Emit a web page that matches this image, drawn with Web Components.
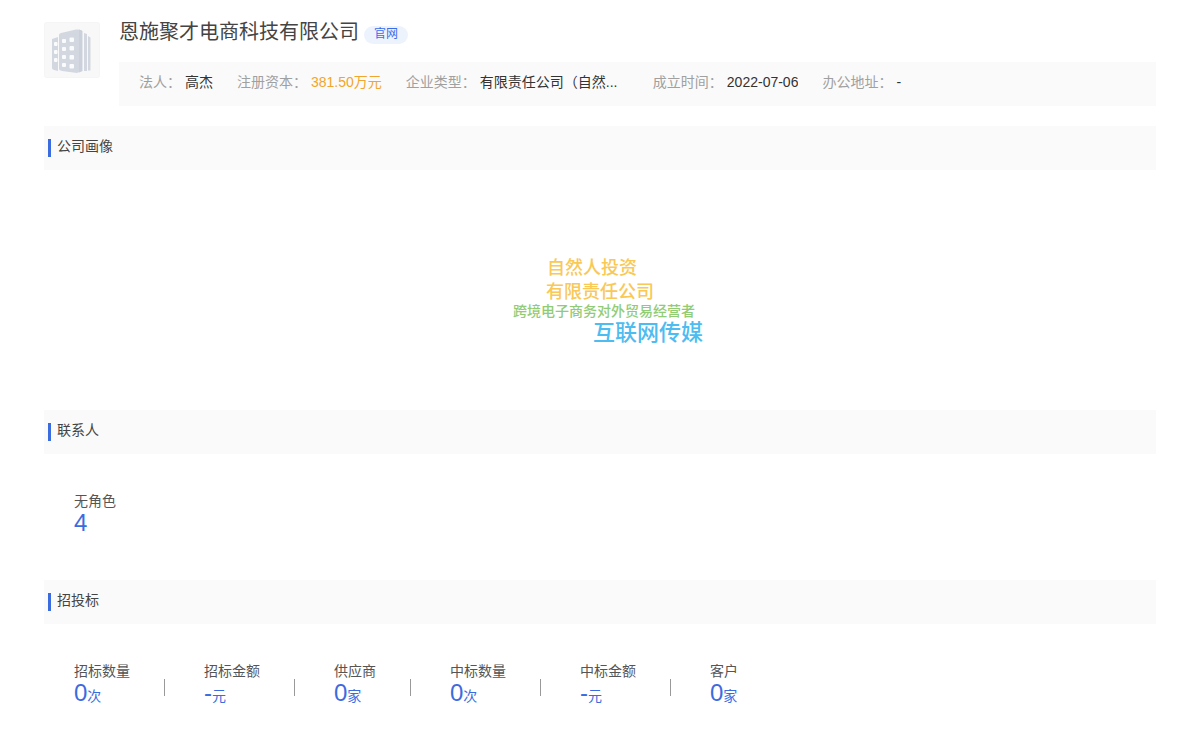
<!DOCTYPE html>
<html lang="zh-CN">
<head>
<meta charset="utf-8">
<title>恩施聚才电商科技有限公司</title>
<style>
body{margin:0;background:#fff;color:#444;font:14px/20px "Liberation Sans","Noto Sans CJK SC",sans-serif}
</style>
</head>
<body>
<company-page></company-page>
<script>
const define=(name,html)=>{
  const t=document.createElement('template');
  t.innerHTML=html;
  customElements.define(name,class extends HTMLElement{
    constructor(){super();this.attachShadow({mode:'open'}).append(t.content.cloneNode(true));}
  });
};

define('company-logo',`
<style>:host{display:block;width:56px;height:56px;flex:none}svg{display:block}</style>
<svg width="56" height="56" viewBox="0 0 56 56" role="img" aria-label="公司">
<rect x=".5" y=".5" width="55" height="55" rx="2" fill="#f8f8f9" stroke="#f5f5f6"/>
<path d="M8 17 L14 15 V49 L10 48 Q8 47.500 8 46 Z" fill="#d3d8e0"/>
<path d="M15 13 Q15 11.500 17 11 L32 7.500 Q35 7 38 8.500 V49 L33 51 L18 49 Q15 48.500 15 47 Z" fill="#d3d8e0"/>
<path d="M35 7.600 L38.500 9 V49 L35 50.500Z" fill="#cbd1da"/>
<path d="M40 11 L43 12 V49 H40Z M44 14 L46.500 15.500 V48.500 H44Z" fill="#d3d8e0"/>
<g fill="#fafbfc"><rect x="10" y="20" width="3.500" height="4" rx="1"/><rect x="10" y="28" width="3.500" height="4" rx="1"/><rect x="10" y="36" width="3.500" height="4" rx="1"/>
<rect x="18" y="17" width="4" height="4" rx="1"/><rect x="25.500" y="15.500" width="4.500" height="4.500" rx="1"/>
<rect x="18" y="25" width="4" height="4" rx="1"/><rect x="25.500" y="24" width="4.500" height="4.500" rx="1"/>
<rect x="18" y="33" width="4" height="4" rx="1"/><rect x="25.500" y="33" width="4.500" height="4.500" rx="1"/>
<rect x="18" y="41" width="4" height="4" rx="1"/><rect x="25.500" y="42" width="4.500" height="4.500" rx="1"/></g>
</svg>`);

define('info-item',`
<style>
:host{display:flex;gap:4px;color:#333;white-space:nowrap;--value-width:auto}
.k{color:#a0a0a0}
.v{width:var(--value-width);overflow:hidden;text-overflow:ellipsis}
</style>
<span class="k"><slot name="label"></slot></span><span class="v"><slot></slot></span>`);

define('company-header',`
<style>
:host{display:flex;gap:19px;align-items:flex-start}
.main{flex:1;min-width:0}
.title{display:flex;align-items:center;gap:5px;height:26px;margin-bottom:14px}
h1{margin:0 0 6px;font-size:20px;line-height:24px;font-weight:400;color:#444}
a{box-sizing:border-box;height:18px;padding:0 10px;border-radius:9px;background:#edf3fd;color:#3a6ce8;font-size:12px;line-height:16px;text-decoration:none}
.info{display:flex;flex-wrap:wrap;column-gap:24px;padding:10px 20px 14px;background:#fafafa}
.type{--value-width:149px}
.money{color:#f0a52e}
</style>
<company-logo></company-logo>
<div class="main">
<div class="title"><h1>恩施聚才电商科技有限公司</h1><a href="#site">官网</a></div>
<div class="info">
<info-item><span slot="label">法人：</span>高杰</info-item>
<info-item><span slot="label">注册资本：</span><span class="money">381.50万元</span></info-item>
<info-item class="type"><span slot="label">企业类型：</span>有限责任公司（自然...</info-item>
<info-item><span slot="label">成立时间：</span>2022-07-06</info-item>
<info-item><span slot="label">办公地址：</span>-</info-item>
</div>
</div>`);

define('page-section',`
<style>
:host{display:block}
header{display:flex;gap:6px;padding:10px 4px 13px;background:#fafafa}
header::before{content:"";width:3px;height:18px;margin-top:3px;background:#3a6ce0}
h2{margin:0;font-size:14px;line-height:20px;font-weight:400;color:#444}
</style>
<header><h2><slot name="title"></slot></h2></header>
<slot></slot>`);

define('word-cloud',`
<style>
:host{display:flex;justify-content:center;align-items:center;height:240px}
.canvas{position:relative;width:192px;height:88px}
span{position:absolute;white-space:nowrap;font-weight:500}
.m{font-size:18px;line-height:24px;color:#f9c855}
.s{font-size:14px;line-height:20px;color:#91cc75}
.l{font-size:22px;line-height:28px;color:#4dbcf0}
</style>
<div class="canvas">
<span class="m" style="left:43px;top:10px">自然人投资</span>
<span class="m" style="left:42px;top:34px">有限责任公司</span>
<span class="s" style="left:9px;top:55px">跨境电子商务对外贸易经营者</span>
<span class="l" style="left:89px;top:73px">互联网传媒</span>
</div>`);

define('stat-item',`
<style>
:host{display:block;color:#555}
.v{color:#3a6ce0;line-height:24px;white-space:nowrap}
b{font-size:24px;font-weight:400}
</style>
<div><slot name="label"></slot></div>
<div class="v"><b><slot></slot></b><slot name="unit"></slot></div>`);

define('stat-row',`
<style>
:host{display:flex;flex-wrap:wrap;padding:37px 30px 42px}
::slotted(hr){width:1px;height:17px;margin:18px 39px 0 34px;border:0;background:#999}
</style><slot></slot>`);

define('company-page',`
<style>
:host{display:block;padding:22px 44px 0}
.first{margin-top:20px}
</style>
<company-header></company-header>
<page-section class="first"><span slot="title">公司画像</span><word-cloud></word-cloud></page-section>
<page-section><span slot="title">联系人</span>
<stat-row><stat-item><span slot="label">无角色</span>4</stat-item></stat-row>
</page-section>
<page-section><span slot="title">招投标</span>
<stat-row>
<stat-item><span slot="label">招标数量</span>0<span slot="unit">次</span></stat-item><hr>
<stat-item><span slot="label">招标金额</span>-<span slot="unit">元</span></stat-item><hr>
<stat-item><span slot="label">供应商</span>0<span slot="unit">家</span></stat-item><hr>
<stat-item><span slot="label">中标数量</span>0<span slot="unit">次</span></stat-item><hr>
<stat-item><span slot="label">中标金额</span>-<span slot="unit">元</span></stat-item><hr>
<stat-item><span slot="label">客户</span>0<span slot="unit">家</span></stat-item>
</stat-row>
</page-section>`);
</script>
</body>
</html>
